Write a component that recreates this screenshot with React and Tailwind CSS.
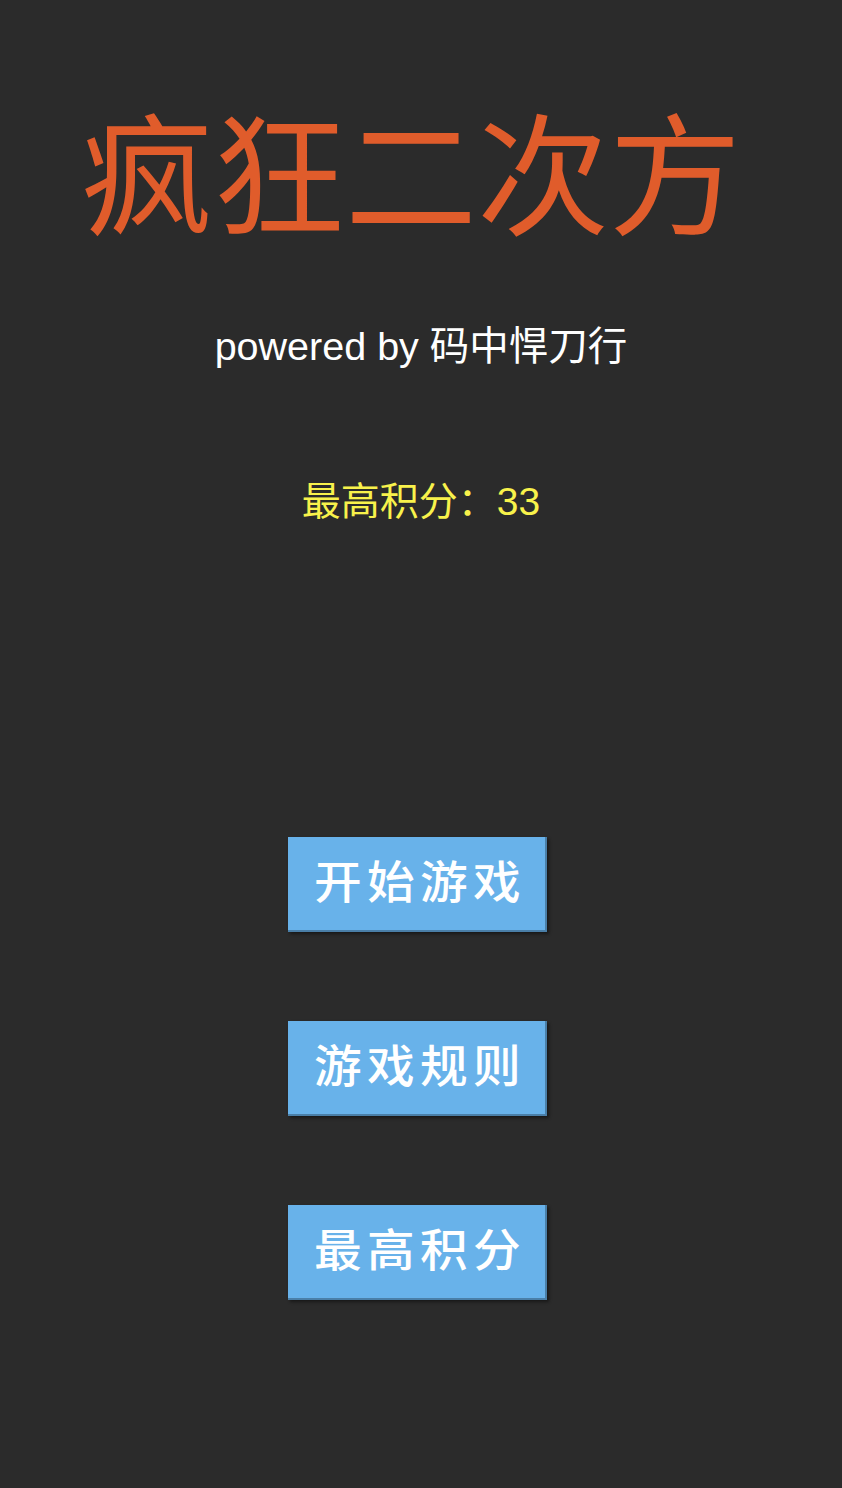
export default function App() {
  const buttons = ["开始游戏", "游戏规则", "最高积分"];

  return (
    <div
      className="min-h-[1488px] w-full bg-[#2b2b2b] flex flex-col items-center"
      style={{ fontFamily: '"Liberation Sans", "Noto Sans CJK SC", sans-serif' }}
    >
      {/* title */}
      <h1 className="mt-[113px] text-[132px] leading-[134px] text-[#e05c2b] font-normal pr-[20px]">
        疯狂二次方
      </h1>

      <p className="mt-[75px] text-[39.5px] leading-[48px] text-white">
        powered by 码中悍刀行
      </p>

      <p className="mt-[108px] text-[39px] leading-[48px] text-[#f8f24b]">
        最高积分：33
      </p>

      {/* menu buttons */}
      <div className="mt-[311px] flex flex-col items-center gap-[89px] pr-[8px]">
        {buttons.map((b) => (
          <button
            key={b}
            className="w-[259px] h-[95px] bg-[#68b2ea] border-r-2 border-b-2 border-[#4a7fa8] shadow-[2px_2px_3px_rgba(0,0,0,0.45)] flex items-center justify-center pl-[8px] text-white text-[45px] font-medium tracking-[5px]"
          >
            <span className="inline-block scale-x-[1.06]">{b}</span>
          </button>
        ))}
      </div>
    </div>
  );
}
